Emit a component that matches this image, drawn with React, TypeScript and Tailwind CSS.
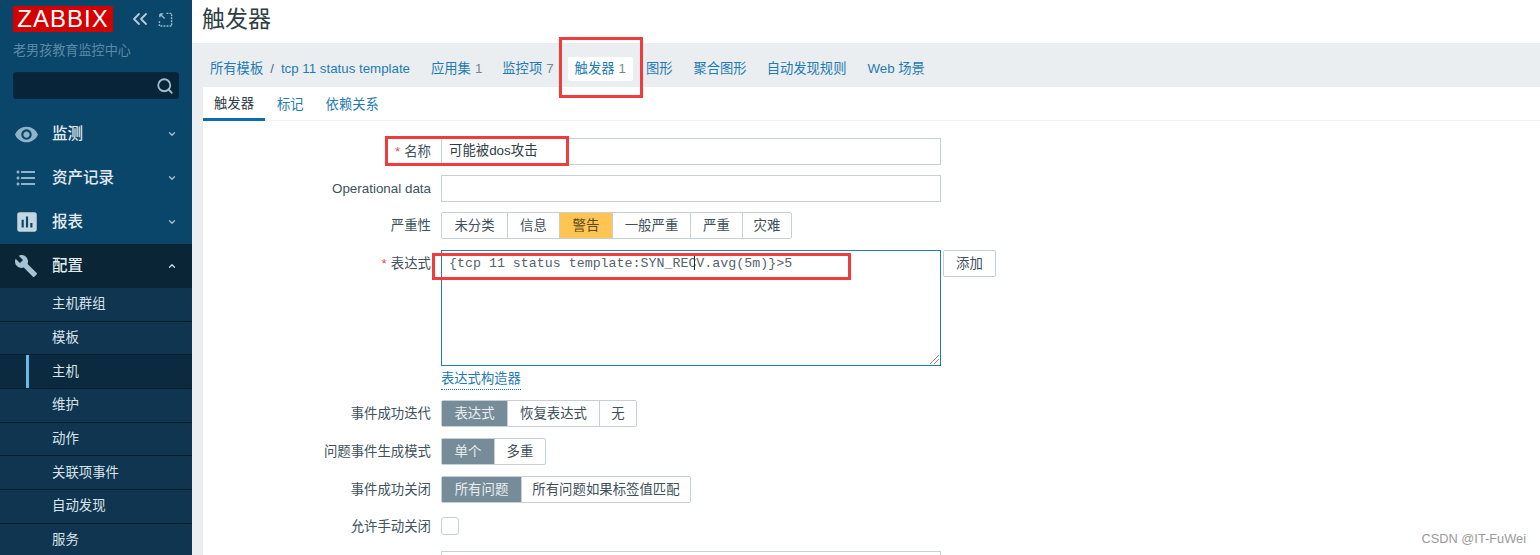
import { ChevronDown, ChevronUp, ChevronsLeft, Search } from "lucide-react";
import { MdBuild, MdFormatListBulleted, MdAssessment, MdVisibility } from "react-icons/md";

const FONT = "[font-family:'Liberation_Sans','Noto_Sans_CJK_SC',sans-serif]";

function MenuItem({ icon, label, open }: { icon: React.ReactNode; label: string; open?: boolean }) {
  return (
    <div className={`flex h-11 items-center pl-[14px] pr-[15px] ${open ? "bg-[#0a2536]" : ""}`}>
      <span className="flex w-[38px] shrink-0 text-[#8fb4ca]">{icon}</span>
      <span className="flex-1 text-[15.5px] font-medium text-[#e3ebf0]">{label}</span>
      {open ? (
        <ChevronUp className="h-[10px] w-[10px] text-[#d5e0e7]" strokeWidth={3} />
      ) : (
        <ChevronDown className="h-[10px] w-[10px] text-[#a9c2d2]" strokeWidth={3} />
      )}
    </div>
  );
}

function SubItem({ label, active }: { label: string; active?: boolean }) {
  return (
    <div
      className={`flex h-[33.7px] shrink-0 items-center border-b border-[#07202f] pl-[26px] text-[13.4px] text-[#d9e3ea] ${
        active ? "bg-[#0b2a3f]" : "bg-[#0f3550]"
      }`}
    >
      <span className={`h-full w-[3px] ${active ? "bg-[#69b8ea]" : ""}`} />
      <span className="pl-[23px]">{label}</span>
    </div>
  );
}

function Row({ label, required, className, children }: { label: string; required?: boolean; className?: string; children: React.ReactNode }) {
  return (
    <div className={`flex items-start ${className ?? ""}`}>
      <div className="flex h-[27px] w-[228px] shrink-0 items-center justify-end pt-px text-[13.4px] text-[#40525c]">
        {required && <span className="mr-1 text-[#d9534f]">*</span>}
        {label}
      </div>
      <div className="ml-[10px] flex items-start">{children}</div>
    </div>
  );
}

function Segments({ items, selected, tone }: { items: [string, number][]; selected: number; tone: "gray" | "yellow" }) {
  return (
    <div className="flex h-[27px] rounded-[2px] border border-[#c5d0d6] bg-white">
      {items.map(([t, w], i) => (
        <div
          key={t}
          style={{ width: w }}
          className={`flex items-center justify-center pt-px text-[13.4px] ${i > 0 ? "border-l border-[#c5d0d6]" : ""} ${
            i === selected
              ? tone === "gray"
                ? "bg-[#768d99] text-[#e8edf0]"
                : "bg-[#ffc552] text-[#5c4a1e]"
              : "text-[#3d4f59]"
          }`}
        >
          {t}
        </div>
      ))}
    </div>
  );
}

function NavLink({ label, count, current, className }: { label: string; count?: number; current?: boolean; className?: string }) {
  return (
    <span className={`whitespace-nowrap rounded-[2px] text-[13.3px] text-[#1f7bb3] ${current ? "bg-white px-[7px] py-[2px]" : ""} ${className ?? ""}`}>
      {label}
      {count != null && <span className="ml-1 text-[#76878f]">{count}</span>}
    </span>
  );
}

export default function App() {
  return (
    <div className={`relative flex h-[555px] w-[1540px] overflow-hidden bg-white ${FONT}`}>
      {/* Sidebar */}
      <aside className="flex w-[192px] shrink-0 flex-col bg-[#0a466a]">
        <div className="flex shrink-0 items-start pl-[13px] pt-[6px]">
          <div className="flex h-[26px] w-[100px] items-center justify-center bg-[#d40000] text-[24px] leading-none tracking-[1px] text-white">
            ZABBIX
          </div>
          <ChevronsLeft className="ml-[15px] mt-[1px] h-[24px] w-[24px] text-[#b5cbd9]" strokeWidth={1.8} />
          <svg className="ml-[6px] mt-[6px]" width="15" height="15" viewBox="0 0 16 16" fill="none" stroke="#9db9ca" strokeWidth="1.5">
            <path d="M9 1.5h5.5V15H1.5V9" strokeDasharray="2 1.2" />
            <path d="M2 2l5 5M2 2h3.6M2 2v3.6" />
          </svg>
        </div>
        <div className="mt-[10px] shrink-0 pl-[13px] text-[13.1px] leading-[18px] text-[#5d8aa6]">老男孩教育监控中心</div>
        <div className="mx-[13px] mt-[12px] flex h-[27px] shrink-0 items-center justify-end rounded-[3px] border border-[#06283c] bg-[#082438] pr-[4px]">
          <Search className="h-[18px] w-[18px] text-[#a3bccb]" strokeWidth={2.4} />
        </div>
        <div className="mt-[13px] shrink-0">
          <MenuItem label="监测" icon={<MdVisibility size={25} />} />
          <MenuItem label="资产记录" icon={<MdFormatListBulleted size={24} />} />
          <MenuItem label="报表" icon={<MdAssessment size={26} className="text-[#c5d6e1]" />} />
          <MenuItem label="配置" open icon={<MdBuild size={24} className="text-[#a5c3d6]" />} />
        </div>
        <div className="flex min-h-0 flex-1 flex-col overflow-hidden bg-[#03141f]">
          <SubItem label="主机群组" />
          <SubItem label="模板" />
          <SubItem label="主机" active />
          <SubItem label="维护" />
          <SubItem label="动作" />
          <SubItem label="关联项事件" />
          <SubItem label="自动发现" />
          <SubItem label="服务" />
        </div>
      </aside>

      {/* Main */}
      <main className="flex min-w-0 flex-1 flex-col">
        <h1 className="flex h-[43px] shrink-0 items-start pl-[10px] pt-[3px] text-[23px] font-normal leading-[32px] text-[#2f3d45]">触发器</h1>
        <div className="flex min-h-0 flex-1 flex-col bg-[#ebeef0] pl-[11px]">
          <nav className="flex h-[44px] shrink-0 items-center pl-[7px] pt-[8px]">
            <NavLink label="所有模板" />
            <span className="mx-[7px] text-[13.3px] text-[#55666f]">/</span>
            <NavLink label="tcp 11 status template" />
            <NavLink className="ml-[21px]" label="应用集" count={1} />
            <NavLink className="ml-[20px]" label="监控项" count={7} />
            <NavLink className="ml-[14px]" label="触发器" count={1} current />
            <NavLink className="ml-[13px]" label="图形" />
            <NavLink className="ml-[21px]" label="聚合图形" />
            <NavLink className="ml-[20px]" label="自动发现规则" />
            <NavLink className="ml-[21px]" label="Web 场景" />
          </nav>
          <div className="flex min-h-0 flex-1 flex-col bg-white">
            <div className="flex h-[34px] shrink-0 border-b border-[#eef1f3] text-[13.3px]">
              <span className="flex h-[34px] w-[62px] items-center justify-center border-b-[3px] border-[#0a6eae] pt-[3px] text-[#2f3d45]">触发器</span>
              <span className="ml-[12px] flex items-center pt-[3px] text-[#1f7bb3]">标记</span>
              <span className="ml-[22px] flex items-center pt-[3px] text-[#1f7bb3]">依赖关系</span>
            </div>
            <form className="pt-[17px]">
              <Row label="名称" required>
                <div className="flex h-[27px] w-[500px] items-center border border-[#c5d0d6] pl-[7px] text-[13.4px] text-[#2f3d45]">可能被dos攻击</div>
              </Row>
              <Row label="Operational data" className="mt-[10px]">
                <div className="h-[27px] w-[500px] border border-[#c5d0d6]" />
              </Row>
              <Row label="严重性" className="mt-[10px]">
                <Segments
                  tone="yellow"
                  selected={2}
                  items={[["未分类", 65], ["信息", 52], ["警告", 53], ["一般严重", 78], ["严重", 52], ["灾难", 49]]}
                />
              </Row>
              <Row label="表达式" required className="mt-[11px]">
                <div className="relative h-[116px] w-[500px] border border-[#1f7bb3] pl-[7px] pt-[4px] font-['Liberation_Mono',monospace] text-[13.3px] leading-[18px] text-[#55646d]">
                  {"{tcp 11 status template:SYN_RECV.avg(5m)}>5"}
                  <span className="absolute left-[252px] top-[3px] h-[16px] w-px bg-[#1b2a33]" />
                  <svg className="absolute bottom-[1px] right-[1px]" width="10" height="10" viewBox="0 0 10 10" stroke="#8a969c" strokeWidth="1">
                    <path d="M1 10L10 1M5 10l5-5" />
                  </svg>
                </div>
                <div className="ml-[2px] flex h-[27px] w-[53px] items-center justify-center rounded-[2px] border border-[#c5d0d6] pt-px text-[13.4px] text-[#3d4f59]">添加</div>
              </Row>
              <div className="ml-[238px] mt-[4px] h-[20px] w-fit border-b border-dotted border-[#1f7bb3] text-[13.3px] leading-[18px] text-[#1f7bb3]">表达式构造器</div>
              <Row label="事件成功迭代" className="mt-[10px]">
                <Segments tone="gray" selected={0} items={[["表达式", 65], ["恢复表达式", 92], ["无", 37]]} />
              </Row>
              <Row label="问题事件生成模式" className="mt-[11px]">
                <Segments tone="gray" selected={0} items={[["单个", 52], ["多重", 51]]} />
              </Row>
              <Row label="事件成功关闭" className="mt-[11px]">
                <Segments tone="gray" selected={0} items={[["所有问题", 79], ["所有问题如果标签值匹配", 169]]} />
              </Row>
              <Row label="允许手动关闭" className="mt-[10px]">
                <div className="mt-[4px] h-[18px] w-[18px] rounded-[3px] border border-[#c5d0d6]" />
              </Row>
              <div className="ml-[238px] mt-[11px] h-[27px] w-[500px] border border-[#c5d0d6]" />
            </form>
          </div>
        </div>
      </main>

      {/* Screenshot annotations */}
      <div className="absolute left-[559px] top-[37px] h-[61px] w-[84px] border-[3px] border-[#f03c3c]" />
      <div className="absolute left-[385px] top-[136px] h-[30px] w-[184px] border-[3px] border-[#f03c3c]" />
      <div className="absolute left-[432px] top-[253px] h-[27px] w-[419px] border-[3px] border-[#f03c3c]" />
      <div className="absolute bottom-[9px] right-[14px] text-[12.8px] leading-none text-[#9a9a9a]">CSDN @IT-FuWei</div>
    </div>
  );
}
